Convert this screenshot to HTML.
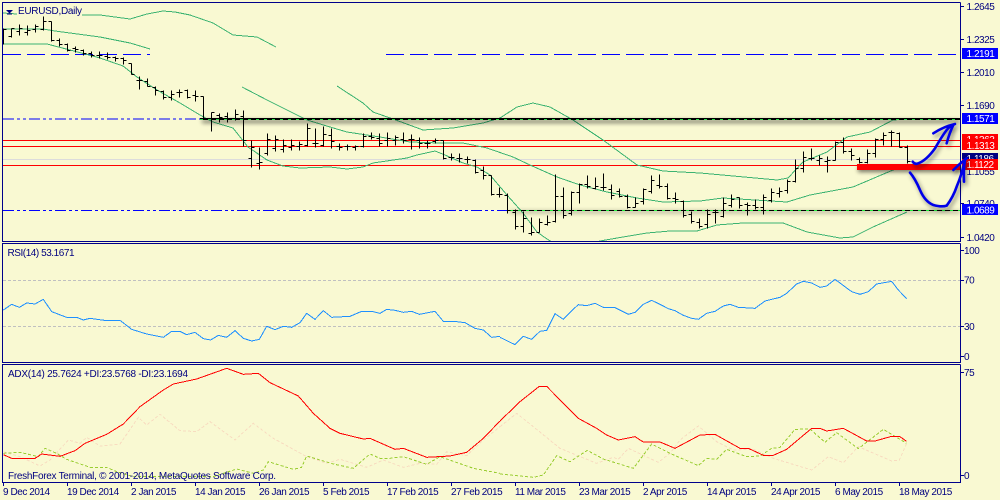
<!DOCTYPE html>
<html><head><meta charset="utf-8"><title>EURUSD,Daily</title>
<style>
html,body{margin:0;padding:0;background:#f9f9d2;width:1000px;height:500px;overflow:hidden}
svg{display:block}
text{font-family:"Liberation Sans",sans-serif;font-size:10px;fill:#000080;letter-spacing:-.45px}
.w{fill:#fff}
.l{fill:none;vector-effect:non-scaling-stroke;stroke-width:1;shape-rendering:crispEdges}
.g{stroke:#3cb371}
</style></head><body>
<svg width="1000" height="500" viewBox="0 0 1000 500" xmlns="http://www.w3.org/2000/svg">
<defs>
<clipPath id="m"><rect x="3" y="3" width="957" height="238"/></clipPath>
<filter id="b" filterUnits="userSpaceOnUse" x="0" y="100" width="1000" height="130"><feGaussianBlur stdDeviation="2"/></filter>
<filter id="s" filterUnits="userSpaceOnUse" x="850" y="100" width="150" height="130"><feDropShadow dx="2" dy="3" stdDeviation="2" flood-color="#000" flood-opacity=".45"/></filter>
</defs>
<rect width="1000" height="500" fill="#f9f9d2"/>

<g clip-path="url(#m)">
<!-- levels -->
<rect x="3" y="159" width="957" height="1" fill="#dcdcdc"/>
<rect x="3" y="140" width="957" height="1" fill="#f00"/>
<rect x="3" y="146" width="957" height="1" fill="#f00"/>
<rect x="3" y="165" width="957" height="1" fill="#f00"/>
<path d="M3 54.5H150M386 54.5H958" stroke="#00f" stroke-width="1" stroke-dasharray="18 6" fill="none"/>
<path d="M3 119H200" stroke="#00f" stroke-width="1" stroke-dasharray="11 3 3 3 3 3" fill="none"/>
<path d="M3 210.5H510" stroke="#00f" stroke-width="1" stroke-dasharray="11 3 3 3 3 3" fill="none"/>

<!-- bands -->
<g fill="none">
<polyline class="l g" points="3,13 17,14"/>
<polyline class="l g" points="82,15 100,15 130,19 147,14 163,11 175,12 190,15 213,23 233,35 257,37 276,47"/>
<polyline class="l g" points="337,86 363,103 373,112 393,119 423,130 453,128 483,123 500,118 517,107 533,103 550,107 573,120 603,140 637,165 663,171 700,173 777,180 788,178 803,162 827,152 847,137 870,132 893,120 907,119"/>
<polyline class="l g" points="3,29 43,29 55,31 70,33 100,37 130,43 150,49"/>
<polyline class="l g" points="242,87 267,100 287,110 307,120 330,127 347,132 380,137 410,142 440,143 463,143 487,148 513,157 530,165 557,177 580,185 607,192 637,198 663,202 700,201 723,198 787,202 810,195 853,187 893,170 907,167"/>
<polyline class="l g" points="3,44 47,44 70,50 100,58 123,66 137,77 157,90 180,103 200,115 213,122 233,128 248,147 267,160 283,166 300,168 330,167 347,169 363,167 373,163 407,158 417,155 435,151 445,155 463,163 477,167 490,175 507,195 523,213 537,232 547,239 552,242"/>
<polyline class="l g" points="597,242 600,241 623,237 647,233 670,231 697,231 717,225 743,223 783,223 807,232 840,238 853,237 873,227 907,212"/>
</g>

<!-- thick trend lines with shadow -->
<rect x="202" y="120" width="758" height="3" fill="#000" opacity=".55" filter="url(#b)"/>
<rect x="200" y="118" width="760" height="2" fill="#000"/>
<path d="M200 119.5H960" stroke="#2fdc4a" stroke-dasharray="3 5" stroke-width="1" fill="none"/>
<rect x="510" y="211" width="450" height="2" fill="#000" opacity=".4" filter="url(#b)"/>
<rect x="510" y="210" width="450" height="1" fill="#000"/>
<path d="M510 210.5H960" stroke="#1ff03c" stroke-dasharray="3 5" stroke-width="1" fill="none"/>
<rect x="858" y="167" width="103" height="5" fill="#000" opacity=".55" filter="url(#b)"/>

<!-- price bars -->
<path transform="translate(.5,.5)" shape-rendering="crispEdges" stroke="#000" stroke-width="1" fill="none" d="
M3 28V44M0 36h3M3 29h3M11 28V37M8 36h3M11 28h3M19 24V35M16 31h3M19 28h3M27 25V35M24 32h3M27 30h3M35 24V32M32 29h3M35 26h3M43 16V30M40 29h3M43 21h3
M51 21V41M48 21h3M51 40h3M59 38V46M56 40h3M59 44h3M67 43V51M64 44h3M67 50h3M75 46V52M72 48h3M75 49h3M83 49V55M80 50h3M83 53h3M91 51V57M88 53h3M91 55h3
M99 51V58M96 55h3M99 55h3M107 52V59M104 56h3M107 57h3M115 56V61M112 57h3M115 58h3M123 57V64M120 58h3M123 60h3M131 63V74M128 63h3M131 74h3M139 76V89M136 80h3M139 80h3
M147 78V86M144 81h3M147 86h3M155 86V95M152 87h3M155 90h3M163 90V99M160 91h3M163 97h3M171 90V100M168 97h3M171 94h3M179 89V97M176 92h3M179 92h3M187 89V98M184 90h3M187 97h3
M195 90V101M192 95h3M195 96h3M203 96V119M200 96h3M203 118h3M211 112V131M208 118h3M211 112h3M219 113V122M216 115h3M219 117h3M227 112V122M224 116h3M227 118h3M235 109V120M232 118h3M235 114h3
M243 110V146M240 116h3M243 140h3M251 140V167M248 158h3M251 147h3M259 147V169M256 163h3M259 162h3M267 133V155M264 153h3M267 139h3M275 135V151M272 148h3M275 139h3M283 139V152M280 149h3M283 145h3
M291 139V150M288 147h3M291 145h3M299 141V150M296 146h3M299 144h3M307 123V146M304 145h3M307 128h3M315 128V147M312 143h3M315 143h3M323 126V146M320 145h3M323 134h3M331 128V148M328 135h3M331 141h3
M339 143V150M336 146h3M339 147h3M347 144V150M344 146h3M347 146h3M355 145V150M352 147h3M355 146h3M363 133V147M360 146h3M363 136h3M371 132V139M368 136h3M371 137h3M379 133V146M376 138h3M379 143h3
M387 132V146M384 140h3M387 138h3M395 135V145M392 140h3M395 137h3M403 132V143M400 139h3M403 140h3M411 134V149M408 139h3M411 139h3M419 137V148M416 140h3M419 143h3M427 140V148M424 143h3M427 143h3
M435 138V143M432 141h3M435 140h3M443 140V159M440 140h3M443 158h3M451 153V160M448 157h3M451 157h3M459 153V162M456 158h3M459 158h3M467 156V163M464 159h3M467 159h3M475 159V173M472 160h3M475 172h3
M483 166V179M480 170h3M483 175h3M491 175V195M488 175h3M491 194h3M499 187V197M496 194h3M499 194h3M507 193V213M504 195h3M507 210h3M515 209V229M512 212h3M515 226h3M523 211V232M520 226h3M523 218h3
M531 217V235M528 233h3M531 232h3M539 218V232M536 232h3M539 222h3M547 215V225M544 224h3M547 222h3M555 174V222M552 221h3M555 196h3M563 187V218M560 196h3M563 215h3M571 191V215M568 213h3M571 192h3
M579 183V203M576 192h3M579 184h3M587 175V188M584 184h3M587 186h3M595 177V189M592 188h3M595 186h3M603 173V190M600 187h3M603 187h3M611 184V199M608 189h3M611 195h3M619 188V197M616 191h3M619 196h3
M627 194V208M624 196h3M627 207h3M635 197V207M632 207h3M635 203h3M643 188V204M640 201h3M643 189h3M651 175V193M648 191h3M651 180h3M659 174V188M656 185h3M659 186h3M667 183V199M664 186h3M667 198h3
M675 192V203M672 198h3M675 199h3M683 200V217M680 201h3M683 215h3M691 211V223M688 214h3M691 221h3M699 218V228M696 222h3M699 226h3M707 209V228M704 224h3M707 214h3M715 209V223M712 212h3M715 212h3
M723 197V217M720 216h3M723 203h3M731 194V207M728 205h3M731 199h3M739 197V208M736 197h3M739 205h3M747 202V215M744 204h3M747 205h3M755 199V209M752 205h3M755 207h3M763 194V214M760 207h3M763 197h3
M771 188V202M768 200h3M771 192h3M779 187V197M776 193h3M779 191h3M787 179V193M784 190h3M787 181h3M795 159V182M792 181h3M795 168h3M803 151V172M800 168h3M803 157h3M811 148V160M808 158h3M811 158h3
M819 155V165M816 160h3M819 158h3M827 156V172M824 161h3M827 160h3M835 141V160M832 160h3M835 142h3M843 137V153M840 142h3M843 151h3M851 148V160M848 151h3M851 155h3M859 157V163M856 159h3M859 162h3
M867 149V163M864 162h3M867 153h3M875 138V157M872 153h3M875 139h3M883 132V145M880 139h3M883 135h3M891 130V146M888 132h3M891 132h3M899 132V147M896 133h3M899 147h3M907 145V163M904 147h3M907 161h3"/>
<rect x="857" y="164" width="104" height="6" fill="#f00"/>
</g>

<!-- frames -->
<g fill="none" stroke="#00008b" stroke-width="1" shape-rendering="crispEdges">
<path d="M960.5 2.5H2.5V241.5H960.5V2.5"/>
<path d="M960.5 243.5H2.5V362.5H960.5V243.5"/>
<path d="M960.5 364.5H2.5V482.5H960.5V364.5"/>
<path d="M961 6.5h3M961 39.5h3M961 72.5h3M961 105.5h3M961 171.5h3M961 203.5h3M961 237.5h3M961 250.5h3M961 280.5h3M961 326.5h3M961 356.5h3M961 372.5h3M961 475.5h3M3.5 483v3M67.5 483v3M131.5 483v3M195.5 483v3M259.5 483v3M323.5 483v3M387.5 483v3M451.5 483v3M515.5 483v3M579.5 483v3M643.5 483v3M707.5 483v3M771.5 483v3M835.5 483v3M899.5 483v3"/>
</g>

<!-- RSI -->
<path d="M3 280.5H960M3 326.5H960" stroke="#c0c0c0" stroke-width="1" stroke-dasharray="3 2" fill="none"/>
<g fill="none" stroke="#1e90ff">
<polyline class="l" transform="translate(0,240) scale(.33333)" points="10,210 35,193 58,202 80,189 105,192 130,178 155,215 200,232 230,232 250,240 270,235 320,242 360,241 395,268 440,282 490,292 515,274 540,274 560,284 585,277 610,296 632,300 655,286 680,292 705,272 730,295 755,303 778,298 800,259 825,269 850,259 875,262 900,248 920,220 945,238 970,212 995,232 1050,229 1085,214 1115,214 1140,220 1160,208 1185,211 1210,217 1235,214 1258,223 1305,214 1330,244 1370,245 1395,248 1425,265 1450,270 1475,292 1500,289"/>
<polyline class="l" transform="translate(500,240) scale(.33333)" points="0,292 45,314 70,289 95,298 120,274 140,271 165,221 190,238 215,212 235,194 260,197 285,190 310,202 345,203 385,223 405,217 430,193 455,181 480,193 505,206 525,212 550,226 575,235 595,238 620,220 645,214 670,198 690,193 715,202 765,205 795,183 840,172 860,160 890,132 910,124 935,129 960,142 980,138 1005,118 1055,155 1080,163 1105,155 1130,132 1175,124 1195,150 1220,176"/>
</g>

<!-- ADX -->
<g fill="none" stroke="#f8dcc0" stroke-dasharray="3 2">
<polyline class="l" transform="translate(0,360) scale(.33333)" points="10,275 60,290 120,318 150,300 205,240 240,250 260,232 300,258 360,252 415,172 440,195 480,163 540,212 590,215 630,185 705,240 760,190 820,235 920,290 980,310 1020,298 1060,310 1100,322 1150,300 1210,322 1260,310 1310,313 1340,275 1400,287 1450,240 1500,200"/>
<polyline class="l" transform="translate(500,360) scale(.33333)" points="0,200 50,160 100,200 180,265 290,310 340,292 355,298 385,265 475,307 510,280 540,240 595,198 650,245 700,270 760,268 820,295 935,330 985,290 1030,308 1075,260 1175,303 1198,300 1220,250"/>
</g>
<g fill="none" stroke="#9acd32" stroke-dasharray="3 2">
<polyline class="l" transform="translate(0,360) scale(.33333)" points="10,280 45,278 65,278 115,290 135,265 170,280 200,298 270,322 320,322 350,335 400,350 640,350 710,327 760,340 790,330 805,305 880,328 905,322 920,288 1000,312 1060,325 1110,282 1140,295 1170,295 1210,290 1280,313 1320,290 1420,325 1500,340"/>
<polyline class="l" transform="translate(500,360) scale(.33333)" points="0,342 100,352 130,345 170,287 210,305 262,271 310,297 400,325 455,252 510,280 595,317 620,295 650,298 680,268 740,290 780,288 815,265 840,262 885,208 930,207 975,247 1010,218 1075,266 1150,208 1220,250"/>
</g>
<g fill="none" stroke="#f00">
<polyline class="l" transform="translate(0,360) scale(.33333)" points="10,284 35,295 105,295 125,282 180,289 225,272 255,250 320,223 370,192 420,140 490,90 520,72 590,57 680,25 730,43 775,40 810,68 895,108 940,160 990,205 1020,220 1090,237 1110,235 1185,268 1210,265 1280,292 1350,288 1400,277 1450,235 1500,183"/>
<polyline class="l" transform="translate(500,360) scale(.33333)" points="0,183 60,125 118,79 140,79 200,140 235,175 290,205 320,225 355,240 405,230 430,246 480,246 525,265 600,225 645,223 720,265 745,265 790,286 820,286 860,268 935,205 960,205 980,213 1030,205 1100,243 1125,243 1175,229 1198,229 1220,244"/>
</g>

<!-- titles -->
<path d="M6 10h7l-3.500 3.500z" fill="#000080"/>
<path d="M7 14h5" stroke="#000080" stroke-width="1"/>
<text x="18" y="14" textLength="64" style="letter-spacing:0">EURUSD,Daily</text>
<text x="7.500" y="256" textLength="67" style="letter-spacing:0">RSI(14) 53.1671</text>
<text x="8" y="377" textLength="180" style="letter-spacing:0">ADX(14) 25.7624 +DI:23.5768 -DI:23.1694</text>
<text x="8" y="479" textLength="268" style="letter-spacing:0">FreshForex Terminal, © 2001-2014, MetaQuotes Software Corp.</text>

<!-- axis labels -->
<text x="966.500" y="10">1.2645</text>
<text x="966.500" y="43">1.2325</text>
<text x="966.500" y="76">1.2010</text>
<text x="966.500" y="109">1.1690</text>
<text x="966.500" y="175">1.1055</text>
<text x="966.500" y="207">1.0740</text>
<text x="966.500" y="241">1.0420</text>
<text x="964" y="254">100</text>
<text x="964" y="283.500">70</text>
<text x="964" y="330">30</text>
<text x="964" y="360">0</text>
<text x="964" y="376">75</text>
<text x="964" y="479">0</text>

<rect x="962" y="48" width="36" height="11" fill="#00f"/><text class="w" x="966.500" y="57">1.2191</text>
<rect x="962" y="113" width="36" height="11" fill="#00f"/><text class="w" x="966.500" y="122">1.1571</text>
<rect x="962" y="134" width="36" height="11" fill="#f00"/><text class="w" x="966.500" y="143">1.1363</text>
<rect x="962" y="139" width="36" height="11" fill="#f00"/><text class="w" x="966.500" y="149">1.1313</text>
<rect x="962" y="153" width="36" height="11" fill="#000080"/><text class="w" x="966.500" y="162">1.1186</text>
<rect x="962" y="159" width="36" height="11" fill="#f00"/><text class="w" x="966.500" y="168">1.1122</text>
<rect x="962" y="204" width="36" height="11" fill="#00f"/><text class="w" x="966.500" y="213.500">1.0689</text>

<!-- dates -->
<text x="3" y="495">9 Dec 2014</text>
<text x="67" y="495">19 Dec 2014</text>
<text x="131" y="495">2 Jan 2015</text>
<text x="195" y="495">14 Jan 2015</text>
<text x="259" y="495">26 Jan 2015</text>
<text x="323" y="495">5 Feb 2015</text>
<text x="387" y="495">17 Feb 2015</text>
<text x="451" y="495">27 Feb 2015</text>
<text x="515" y="495">11 Mar 2015</text>
<text x="579" y="495">23 Mar 2015</text>
<text x="643" y="495">2 Apr 2015</text>
<text x="707" y="495">14 Apr 2015</text>
<text x="771" y="495">24 Apr 2015</text>
<text x="835" y="495">6 May 2015</text>
<text x="899" y="495">18 May 2015</text>

<!-- hand drawn arrows -->
<g filter="url(#s)">
<g transform="translate(660,80) scale(.33333)" fill="none" stroke="#0000e8" stroke-linecap="round" stroke-linejoin="round">
<path vector-effect="non-scaling-stroke" stroke-width="2.600" d="M758 245Q765 255 775 250Q800 240 825 205Q845 170 860 150Q870 138 883 133M820 160Q850 140 885 132M860 190Q868 160 880 135"/>
<path vector-effect="non-scaling-stroke" stroke-width="2.600" d="M750 278Q765 295 780 330Q795 365 820 375Q845 382 860 377Q880 350 890 320Q905 285 915 240M880 270Q900 250 920 235M912 305Q910 270 915 240"/>
</g>
</g>
</svg>
</body></html>
